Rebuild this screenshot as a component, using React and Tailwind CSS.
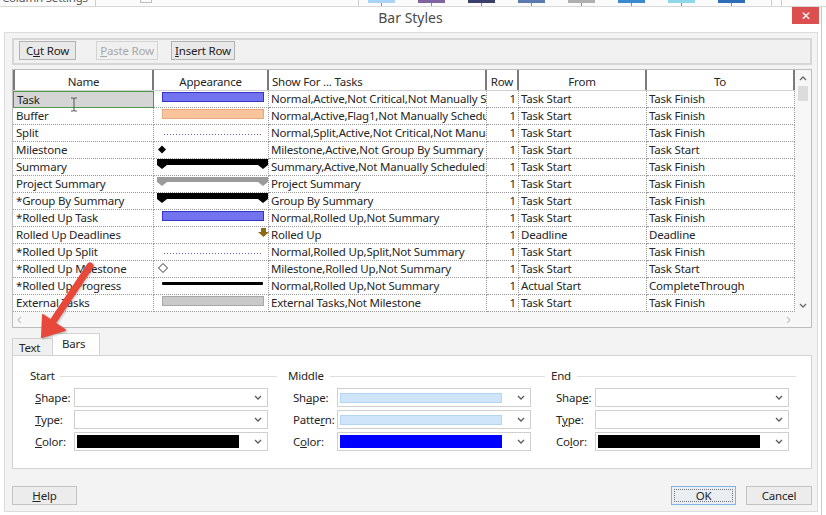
import React from 'react'

const rows = [
  ['Task', 'task', 'Normal,Active,Not Critical,Not Manually Scheduled', 'Task Start', 'Task Finish'],
  ['Buffer', 'buffer', 'Normal,Active,Flag1,Not Manually Scheduled', 'Task Start', 'Task Finish'],
  ['Split', 'split', 'Normal,Split,Active,Not Critical,Not Manually Scheduled', 'Task Start', 'Task Finish'],
  ['Milestone', 'milestone', 'Milestone,Active,Not Group By Summary', 'Task Start', 'Task Start'],
  ['Summary', 'summary', 'Summary,Active,Not Manually Scheduled', 'Task Start', 'Task Finish'],
  ['Project Summary', 'projsum', 'Project Summary', 'Task Start', 'Task Finish'],
  ['*Group By Summary', 'summary', 'Group By Summary', 'Task Start', 'Task Finish'],
  ['*Rolled Up Task', 'task', 'Normal,Rolled Up,Not Summary', 'Task Start', 'Task Finish'],
  ['Rolled Up Deadlines', 'deadline', 'Rolled Up', 'Deadline', 'Deadline'],
  ['*Rolled Up Split', 'split', 'Normal,Rolled Up,Split,Not Summary', 'Task Start', 'Task Finish'],
  ['*Rolled Up Milestone', 'rumile', 'Milestone,Rolled Up,Not Summary', 'Task Start', 'Task Start'],
  ['*Rolled Up Progress', 'progress', 'Normal,Rolled Up,Not Summary', 'Actual Start', 'CompleteThrough'],
  ['External Tasks', 'external', 'External Tasks,Not Milestone', 'Task Start', 'Task Finish'],
]

const ribbonBars = ['#a9d4f5', '#8064a2', '#3b3f6b', '#5b7bb0', '#b0b0b0', '#3a8ad0', '#8ed8ea', '#2e6db8']

const Chevron = ({ up, color = '#5a5a5a' }) => (
  <svg width="8" height="5" viewBox="0 0 8 5" className="shrink-0 block">
    <path d={up ? 'M1 4l3-3 3 3' : 'M1 1l3 3 3-3'} fill="none" stroke={color} strokeWidth="1.3" />
  </svg>
)

const SideChevron = ({ left }) => (
  <svg width="5" height="8" viewBox="0 0 5 8" className="block">
    <path d={left ? 'M4 1L1 4l3 3' : 'M1 1l3 3-3 3'} fill="none" stroke="#c4c4c4" strokeWidth="1.2" />
  </svg>
)

function Appearance({ kind }) {
  let shape = null
  switch (kind) {
    case 'task':
      shape = <rect x="7.5" y="1.5" width="101" height="9" fill="#7373f0" stroke="#3434c6" />
      break
    case 'buffer':
      shape = <rect x="7.5" y="1.5" width="101" height="9" fill="#f9c49c" stroke="#e9a878" />
      break
    case 'split':
      shape = <line x1="9" y1="9.5" x2="108" y2="9.5" stroke="#5d5dd8" strokeDasharray="1 2" />
      break
    case 'milestone':
      shape = <polygon points="7,3.5 11,7.5 7,11.5 3,7.5" fill="#000" />
      break
    case 'summary':
      shape = <path d="M2 0H113V6L108 10L103 6H12L7 10L2 6Z" fill="#000" />
      break
    case 'projsum':
      shape = <path d="M2 1H113V6L108 10L103 6H12L7 10L2 6Z" fill="#9b9b9b" />
      break
    case 'deadline':
      shape = <path d="M106 1H111V5H114L108.5 10L103 5H106Z" fill="#8a6a12" />
      break
    case 'rumile':
      shape = <polygon points="8,2.5 12.5,7 8,11.5 3.5,7" fill="#fff" stroke="#333" />
      break
    case 'progress':
      shape = <rect x="7" y="4" width="101" height="3" rx="1" fill="#000" />
      break
    case 'external':
      shape = <rect x="7.5" y="1.5" width="101" height="9" fill="#c9c9c9" stroke="#a8a8a8" />
      break
    default:
      break
  }
  return (
    <svg width="114" height="16" viewBox="0 0 114 16" className="block">
      {shape}
    </svg>
  )
}

const ToolButton = ({ children, disabled }) => (
  <div
    className={`h-[19px] flex items-center justify-center border ${
      disabled ? 'border-[#d4d4d4] bg-[#f0f0f0] text-[#a8a8a8]' : 'border-[#b2b2b2] bg-[#e9e9e9] text-[#222]'
    }`}
  >
    {children}
  </div>
)

function Combo({ fill, light }) {
  return (
    <div className="w-[194px] h-[19px] border border-[#cfcfcf] bg-white flex items-center pl-[2px] pr-[5px]">
      <div className="flex-1 h-full flex items-center pr-[15px]">
        {fill && <div className="w-full h-[13px]" style={{ background: fill }} />}
        {light && <div className="w-full h-[10px] bg-[#cfe6fa] border border-[#b5d6f2]" />}
      </div>
      <Chevron />
    </div>
  )
}

function Group({ title, width, labelW, lineGap, fields }) {
  return (
    <div className="flex flex-col shrink-0" style={{ width }}>
      <div className="flex items-center h-[14px]">
        <span>{title}</span>
        <div className="flex-1 h-px bg-[#dedede]" style={{ marginLeft: lineGap }} />
      </div>
      <div className="flex flex-col gap-[3px] mt-[5px]">
        {fields.map(([label, combo], i) => (
          <div key={i} className="flex items-center">
            <div className="pl-[5px] shrink-0" style={{ width: labelW }}>
              {label}
            </div>
            {combo}
          </div>
        ))}
      </div>
    </div>
  )
}

const widths = [141, 115, 218, 32, 128, 148]

export default function App() {
  return (
    <div className="relative w-[826px] h-[515px] overflow-hidden bg-white text-[11.5px] tracking-[-0.2px] text-[#262626] [font-family:'Noto_Sans',sans-serif] leading-none">
      {/* ribbon strip behind the dialog */}
      <div className="h-[7px] flex items-start overflow-hidden bg-[#fbfbfb] border-b border-[#d8d8d8]">
        <span className="w-[95px] -mt-[9px] pl-[2px] text-[#555] leading-[14px] whitespace-nowrap">Column Settings</span>
        <div className="w-px h-full bg-[#cfcfcf]" />
        <div className="ml-[44px] w-[12px] h-[3px] border border-t-0 border-[#bdbdbd]" />
        <div className="ml-[206px] w-px h-full bg-[#cfcfcf]" />
        <div className="ml-[9px] flex gap-[23px]">
          {ribbonBars.map((c) => (
            <div key={c} className="flex flex-col items-center">
              <div className="w-[27px] h-[3px]" style={{ background: c }} />
              <div className="w-px h-[3px] bg-[#8a8a8a]" />
            </div>
          ))}
        </div>
        <div className="ml-[26px] w-px h-full bg-[#cfcfcf]" />
        <div className="ml-[9px] w-px h-full bg-[#cfcfcf]" />
      </div>

      <div className="flex">
        <div className="w-[822px] h-[508px] border-r border-[#c8c8c8] flex flex-col">
          {/* title bar */}
          <div className="h-[25px] grid grid-cols-[1fr_auto_1fr]">
            <div />
            <div className="pt-[4px] text-[14px] tracking-normal text-[#4a4a4a]">Bar Styles</div>
            <div className="justify-self-end pr-[2px]">
              <div className="w-[27px] h-[17px] bg-[#dc4f4f] text-white flex items-center justify-center text-[12px]">✕</div>
            </div>
          </div>

          {/* dialog body */}
          <div className="ml-[4px] w-[814px] h-[480px] border border-[#dcdcdc] bg-[#f3f3f3] pl-[7px] pr-[5px] pt-[5px] flex flex-col">
            {/* toolbar */}
            <div className="h-[27px] border-2 border-[#d6d6d6] bg-[#f1f1f1] flex items-start pt-[1px] pl-[5px]">
              <div className="w-[57px]">
                <ToolButton>
                  C<span className="underline">u</span>t Row
                </ToolButton>
              </div>
              <div className="w-[62px] ml-[20px]">
                <ToolButton disabled>
                  <span className="underline">P</span>aste Row
                </ToolButton>
              </div>
              <div className="w-[64px] ml-[13px]">
                <ToolButton>
                  <span className="underline">I</span>nsert Row
                </ToolButton>
              </div>
            </div>

            {/* grid */}
            <div className="mt-[4px] h-[259px] border border-[#bdbdbd] bg-white flex">
              <div className="w-[782px] flex flex-col">
                <div className="h-[21px] flex border-b border-[#d0d0d0]">
                  {['Name', 'Appearance', 'Show For ... Tasks', 'Row', 'From', 'To'].map((h, i) => (
                    <div
                      key={h}
                      className={`h-full flex items-center pt-[3px] border-r-2 border-[#7a7a7a] ${
                        i === 0 ? 'border-l-2' : ''
                      } ${i === 2 ? 'justify-start pl-[3px]' : 'justify-center'}`}
                      style={{ width: widths[i] }}
                    >
                      {h}
                    </div>
                  ))}
                </div>
                {rows.map(([name, kind, show, from, to], r) => (
                  <div key={name} className="h-[17px] flex">
                    <div
                      className={`h-full flex items-center pl-[3px] whitespace-nowrap overflow-hidden ${
                        r === 0
                          ? 'bg-[#d5d5d5] border border-[#4a9a4a]'
                          : 'border-r border-b border-dotted border-[#9a9a9a]'
                      }`}
                      style={{ width: widths[0] }}
                    >
                      {name}
                    </div>
                    <div
                      className="h-full border-r border-b border-dotted border-[#9a9a9a] pl-[1px]"
                      style={{ width: widths[1] }}
                    >
                      <Appearance kind={kind} />
                    </div>
                    <div
                      className="h-full flex items-center pl-[2px] whitespace-nowrap overflow-hidden border-r border-b border-dotted border-[#9a9a9a]"
                      style={{ width: widths[2] }}
                    >
                      {show}
                    </div>
                    <div
                      className="h-full flex items-center justify-end pr-[2px] border-r border-b border-dotted border-[#9a9a9a]"
                      style={{ width: widths[3] }}
                    >
                      1
                    </div>
                    <div
                      className="h-full flex items-center pl-[2px] border-r border-b border-dotted border-[#9a9a9a]"
                      style={{ width: widths[4] }}
                    >
                      {from}
                    </div>
                    <div
                      className="h-full flex items-center pl-[2px] border-r border-b border-dotted border-[#9a9a9a]"
                      style={{ width: widths[5] }}
                    >
                      {to}
                    </div>
                  </div>
                ))}
                <div className="h-[15px] flex items-center justify-between px-[4px] bg-[#f7f7f7]">
                  <SideChevron left />
                  <SideChevron />
                </div>
              </div>
              <div className="flex-1 flex flex-col items-center pt-[6px] pb-[19px] bg-[#f7f7f7]">
                <Chevron up color="#6a6a6a" />
                <div className="mt-[5px] w-[10px] h-[15px] bg-[#dcdcdc]" />
                <div className="flex-1" />
                <Chevron color="#6a6a6a" />
              </div>
            </div>

            {/* tabs */}
            <div className="mt-[5px] h-[22px] flex items-end">
              <div className="w-[41px] h-[17px] border border-b-0 border-[#d2d2d2] bg-[#f0f0f0] flex items-center pl-[6px] pt-[2px]">
                Text
              </div>
              <div className="w-[47px] h-[22px] border border-b-0 border-l-0 border-[#d2d2d2] bg-white flex items-center pl-[9px] pb-[2px]">
                Bars
              </div>
            </div>
            <div className="h-[114px] border border-[#d2d2d2] bg-white pl-[17px] pt-[13px] flex">
              <Group
                title="Start"
                width={247}
                labelW={44}
                lineGap={5}
                fields={[
                  [<><span className="underline">S</span>hape:</>, <Combo />],
                  [<><span className="underline">T</span>ype:</>, <Combo />],
                  [<><span className="underline">C</span>olor:</>, <Combo fill="#000" />],
                ]}
              />
              <div className="w-[11px]" />
              <Group
                title="Middle"
                width={257}
                labelW={49}
                lineGap={6}
                fields={[
                  [<>Sh<span className="underline">a</span>pe:</>, <Combo light />],
                  [<>Patte<span className="underline">r</span>n:</>, <Combo light />],
                  [<>C<span className="underline">o</span>lor:</>, <Combo fill="#0000ff" />],
                ]}
              />
              <div className="w-[6px]" />
              <Group
                title="End"
                width={245}
                labelW={44}
                lineGap={6}
                fields={[
                  [<>Shap<span className="underline">e</span>:</>, <Combo />],
                  [<>T<span className="underline">y</span>pe:</>, <Combo />],
                  [<>Co<span className="underline">l</span>or:</>, <Combo fill="#000" />],
                ]}
              />
            </div>

            {/* bottom buttons */}
            <div className="mt-[17px] flex items-center">
              <div className="w-[65px] h-[19px] border border-[#c2c2c2] bg-[#ececec] flex items-center justify-center">
                <span className="underline">H</span>elp
              </div>
              <div className="flex-1" />
              <div className="w-[65px] h-[19px] border border-[#7eb4ea] bg-[#e9eef3] flex items-center justify-center p-[2px]">
                <div className="w-full h-full border border-dotted border-[#777] flex items-center justify-center">OK</div>
              </div>
              <div className="ml-[10px] w-[66px] h-[19px] border border-[#c2c2c2] bg-[#ececec] flex items-center justify-center">
                Cancel
              </div>
            </div>
          </div>
        </div>
        <div className="flex-1" />
      </div>

      {/* mouse cursor over the Task row */}
      <svg className="absolute left-[70px] top-[97px]" width="8" height="15" viewBox="0 0 8 15">
        <path d="M1 1h2.5l0.5 1 0.5-1H7M4 2v11M1 14h2.5l0.5-1 0.5 1H7" fill="none" stroke="#555" strokeWidth="1" />
      </svg>

      {/* red annotation arrow pointing at the Text tab */}
      <svg className="absolute left-0 top-0 pointer-events-none" width="826" height="515" viewBox="0 0 826 515">
        <g style={{ filter: 'drop-shadow(1px 1px 1px rgba(0,0,0,0.25))' }}>
          <line x1="90" y1="266" x2="54" y2="320" stroke="#e8483a" strokeWidth="7" strokeLinecap="round" />
          <polygon points="42,337 43,315 65,330" fill="#e8483a" stroke="#e8483a" strokeWidth="2" strokeLinejoin="round" />
        </g>
      </svg>
    </div>
  )
}
